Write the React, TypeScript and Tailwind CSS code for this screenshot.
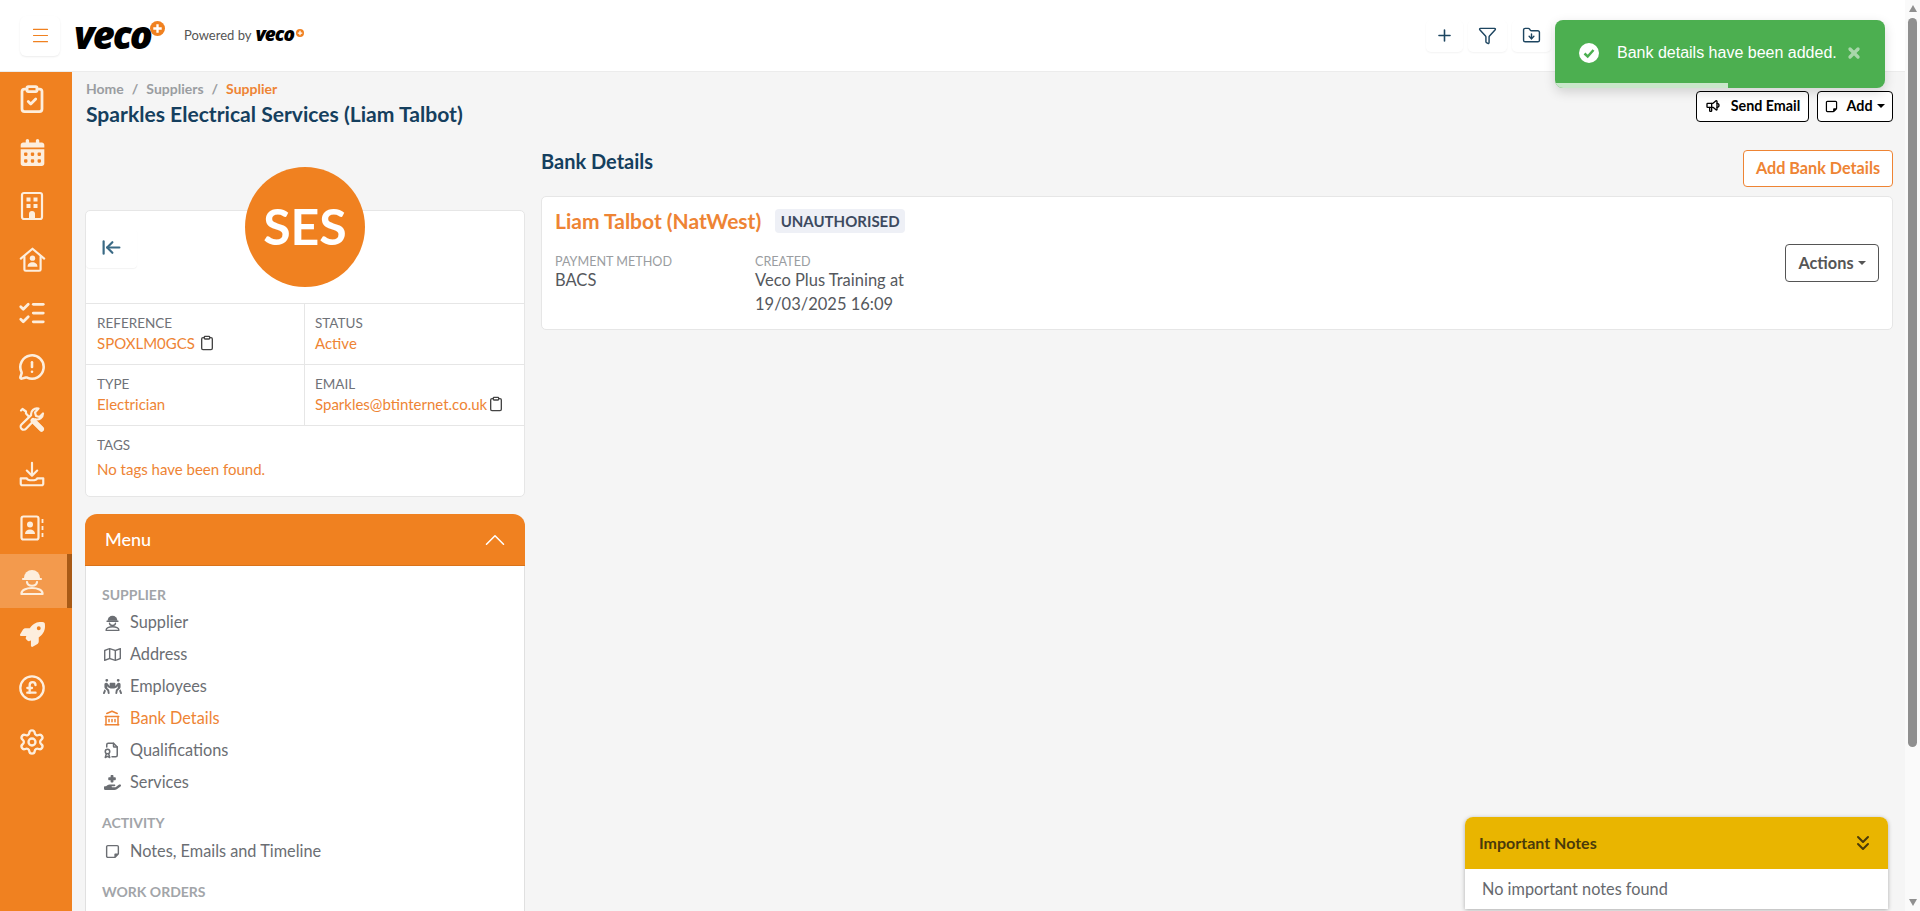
import React from 'react';
import {
  Menu, Plus, Funnel, FolderDown, ArrowLeftToLine, Clipboard, ChevronUp, ChevronsDown,
  ClipboardCheck, ListChecks, MessageCircleWarning, CirclePoundSterling, Settings, X,
} from 'lucide-react';
import { FaCalendarDays, FaPeopleCarryBox, FaRegMap, FaRegNoteSticky, FaRocket, FaHandHoldingMedical } from 'react-icons/fa6';
import { TbFileCertificate, TbBuildingBank, TbSpeakerphone } from 'react-icons/tb';

const BuildingIcon = () => (
  <svg width="24" height="30" viewBox="0 0 24 30" fill="none" stroke="currentColor" strokeWidth="2.2" strokeLinejoin="round">
    <rect x="2" y="2" width="20" height="26" rx="2" />
    <g fill="currentColor" stroke="none">
      <rect x="6.500" y="6.500" width="4" height="4" />
      <rect x="13.500" y="6.500" width="4" height="4" />
      <rect x="6.500" y="13" width="4" height="4" />
      <rect x="13.500" y="13" width="4" height="4" />
      <path d="M9 28v-5a3 3 0 0 1 6 0v5z" />
    </g>
  </svg>
);

const HomeUser = () => (
  <svg width="27" height="27" viewBox="0 0 30 30" fill="none" stroke="currentColor" strokeWidth="2.4" strokeLinejoin="round" strokeLinecap="round">
    <path d="M2 14 15 3l13 11" />
    <path d="M6 12v14a1.500 1.500 0 0 0 1.500 1.500h15A1.500 1.500 0 0 0 24 26V12" />
    <circle cx="15" cy="13.500" r="3" fill="currentColor" stroke="none" />
    <path d="M9.500 23c0-3.200 2.500-5 5.500-5s5.500 1.800 5.500 5z" fill="currentColor" stroke="none" />
  </svg>
);

const ToolsIcon = () => (
  <svg width="26" height="26" viewBox="0 0 26 26" fill="none" stroke="currentColor" strokeLinecap="round" strokeLinejoin="round">
    <path d="M2 3.500 3.500 2 7 4.500v2L13 13" strokeWidth="2.200" />
    <path d="M14 13.500 22.500 22" strokeWidth="5" />
    <path d="M24 6.500a6 6 0 0 1-7.800 5.700L7 21.800a3 3 0 0 1-4.500-4.300l9.600-9.400A6 6 0 0 1 19.500 1.500L16 5.500l1 3.500 3.500 1z" strokeWidth="2.200" fill="#f08120" />
    <path d="M14 13.500 22.500 22" strokeWidth="5" />
  </svg>
);

const InboxDown = () => (
  <svg width="26" height="26" viewBox="0 0 30 30" fill="none" stroke="currentColor" strokeWidth="2.500" strokeLinejoin="round" strokeLinecap="round">
    <path d="M15 2v15M9 11l6 6 6-6" />
    <path d="M2 20h7c1 3 11 3 12 0h7v6a2 2 0 0 1-2 2H4a2 2 0 0 1-2-2z" />
  </svg>
);

const ContactBook = () => (
  <svg width="24" height="26" viewBox="0 0 24 26" fill="none" stroke="currentColor" strokeWidth="2.200" strokeLinejoin="round">
    <rect x="1.500" y="1.500" width="17" height="23" rx="2" />
    <circle cx="10" cy="9.500" r="3" fill="currentColor" stroke="none" />
    <path d="M5 19c0-3 2.200-4.500 5-4.500s5 1.500 5 4.500z" fill="currentColor" stroke="none" />
    <path d="M22.500 4v4M22.500 11v4M22.500 18v4" strokeWidth="1.800" />
  </svg>
);

const Worker = ({ size = 28 }: { size?: number }) => (
  <svg width={size} height={size} viewBox="0 0 28 28" fill="none" stroke="currentColor" strokeWidth="2.200" strokeLinecap="round" strokeLinejoin="round">
    <path d="M6 11a8 8 0 0 1 16 0z" fill="currentColor" stroke="none" />
    <path d="M5 12h18" />
    <path d="M9 15c.5 5 9.500 5 10 0" />
    <path d="M3.500 27c-1-8 22-8 21 0z" />
  </svg>
);

const VecoLogo = ({ big }: { big?: boolean }) => (
  <span className={big ? 'relative inline-block w-[90px]' : 'relative inline-block w-[48px]'}>
    <span className={big
      ? "font-['Open_Sans'] italic font-extrabold text-[38px] leading-[38px] tracking-[-2px] text-black"
      : "font-['Open_Sans'] italic font-extrabold text-[19px] leading-[19px] tracking-[-1px] text-black"}>veco</span>
    <svg className={big ? 'absolute top-[6px] right-[-1px] w-[15px] h-[15px]' : 'absolute top-[4px] right-[-1px] w-[8px] h-[8px]'} viewBox="0 0 16 16">
      <circle cx="8" cy="8" r="8" fill="#f08120" />
      <path d="M8 3.500v9M3.500 8h9" stroke="#fff" strokeWidth="2.500" />
    </svg>
  </span>
);

const sideIcons = [
  <ClipboardCheck size={30} strokeWidth={2.2} />,
  <FaCalendarDays size={27} />,
  <BuildingIcon />,
  <HomeUser />,
  <ListChecks size={30} strokeWidth={2.2} />,
  <MessageCircleWarning size={28} strokeWidth={2.2} />,
  <ToolsIcon />,
  <InboxDown />,
  <ContactBook />,
  <Worker />,
  <FaRocket size={25} />,
  <CirclePoundSterling size={28} strokeWidth={2} />,
  <Settings size={28} strokeWidth={2} />,
];

const InfoCell = ({ label, value, copyGap, wide }: { label: string; value: string; copyGap?: string; wide?: boolean }) => (
  <div className={wide ? 'col-span-2 px-[11px] pt-[10px]' : 'px-[11px] pt-[10px] h-[60px]'}>
    <div className="text-[13.500px] leading-[18px] text-[#6f7278] uppercase">{label}</div>
    <div className={wide ? 'mt-[4px] flex items-center text-[15px] leading-[22px] text-[#ee8434]' : 'flex items-center text-[15px] leading-[22px] text-[#ee8434]'}>
      {value}
      {copyGap && <Clipboard size={16} strokeWidth={2} className={`${copyGap} text-[#444]`} />}
    </div>
  </div>
);

const MenuItem = ({ icon, label, active }: { icon: React.ReactNode; label: string; active?: boolean }) => (
  <div className={active ? 'flex h-[32px] items-center text-[#ee8434]' : 'flex h-[32px] items-center text-[#6b6e73]'}>
    <span className="flex w-[28px] justify-center pr-[8px]">{icon}</span>
    <span className="text-[16.300px]">{label}</span>
  </div>
);

const SectionLabel = ({ children, className }: { children: React.ReactNode; className?: string }) => (
  <div className={`text-[14px] leading-[20px] font-bold uppercase text-[#a2a5a9] ${className ?? ''}`}>{children}</div>
);

const HeadIcon = ({ children, className }: { children: React.ReactNode; className: string }) => (
  <div className={`flex h-[32px] items-center justify-center rounded-[5px] bg-white text-[#1d4560] shadow-[0_1px_2px_rgba(0,0,0,0.05)] ${className}`}>
    {children}
  </div>
);

export default function App() {
  return (
    <div className="flex h-screen w-full overflow-hidden bg-[#f5f5f5] font-['Lato',sans-serif]">
      <div className="flex min-w-0 flex-1 flex-col">
        {/* Top bar */}
        <header className="flex h-[72px] shrink-0 items-center border-b border-[#ececec] bg-white pl-[20px] pr-[354px]">
          <div className="flex h-[40px] w-[40px] items-center justify-center rounded-[6px] bg-white text-[#f08120] shadow-[0_1px_2px_rgba(0,0,0,0.08)]">
            <Menu size={21} strokeWidth={1.300} />
          </div>
          <div className="ml-[14px] mt-[-2px]"><VecoLogo big /></div>
          <div className="ml-[20px] mt-[1px] flex items-center text-[13px] text-[#555]">
            <span className="mr-[4px]">Powered by</span>
            <VecoLogo />
          </div>
          <div className="ml-auto flex gap-[5px]">
            <HeadIcon className="w-[37px]"><Plus size={19} strokeWidth={2} /></HeadIcon>
            <HeadIcon className="w-[39px]"><Funnel size={19} strokeWidth={1.800} /></HeadIcon>
            <HeadIcon className="w-[39px]"><FolderDown size={19} strokeWidth={1.800} /></HeadIcon>
          </div>
        </header>

        <div className="flex min-h-0 flex-1">
          {/* Icon rail */}
          <aside className="w-[72px] shrink-0 bg-[#f08120] text-[#fdeedd]">
            {sideIcons.map((icon, i) => (
              <div key={i} className={i === 9
                ? 'flex h-[53.600px] items-center justify-center border-r-[5px] border-[#a85a16] bg-[#f39a4d] pr-[3px]'
                : 'flex h-[53.600px] items-center justify-center pr-[8px]'}>
                {icon}
              </div>
            ))}
          </aside>

          <main className="min-w-0 flex-1 overflow-hidden pl-[13px] pr-[12px]">
            <div className="flex h-[78px] justify-between">
              <div className="pl-[1px] pt-[7px]">
                <div className="flex gap-[8px] text-[14px] leading-[20px] font-bold text-[#9a9da1]">
                  <span>Home</span><span>/</span><span>Suppliers</span><span>/</span>
                  <span className="text-[#ee8434]">Supplier</span>
                </div>
                <h1 className="mt-[1px] text-[21.100px] leading-[28px] font-bold text-[#153f5e]">Sparkles Electrical Services (Liam Talbot)</h1>
              </div>
              <div className="mt-[19px] flex h-[31px] gap-[8px]">
                <button className="flex w-[113px] items-center justify-center rounded-[4px] border border-black bg-white pb-[2px] text-[14.300px] font-bold text-black">
                  <TbSpeakerphone size={16} className="mr-[10px] mt-[1px]" />Send Email
                </button>
                <button className="flex w-[76px] items-center justify-center rounded-[4px] border border-black bg-white pb-[2px] text-[14.300px] font-bold text-black">
                  <FaRegNoteSticky size={13} className="mr-[8px] mt-[1px]" />Add
                  <span className="ml-[4px] h-0 w-0 border-x-[4px] border-t-[4px] border-x-transparent border-t-black" />
                </button>
              </div>
            </div>

            <div className="flex gap-[16px]">
              {/* Left column */}
              <div className="w-[440px] shrink-0">
                <div className="relative mt-[60px] rounded-[5px] border border-[#e6e6e6] bg-white">
                  <div className="absolute left-[159px] top-[-44px] flex h-[120px] w-[120px] items-center justify-center rounded-full bg-[#f08120] pb-[2px] text-[50px] font-bold text-white">SES</div>
                  <div className="h-[92px] pt-[18px]">
                    <div className="flex h-[39px] w-[51px] items-center justify-center rounded-[4px] pb-[2px] text-[#3a6a85] shadow-[0_1px_1px_rgba(0,0,0,0.05)]">
                      <ArrowLeftToLine size={21} strokeWidth={2.500} />
                    </div>
                  </div>
                  <div className="grid grid-cols-2 border-t border-[#e6e6e6]">
                    <div className="border-r border-[#e6e6e6]"><InfoCell label="Reference" value="SPOXLM0GCS" copyGap="ml-[4px]" /></div>
                    <div className="-ml-px"><InfoCell label="Status" value="Active" /></div>
                  </div>
                  <div className="grid grid-cols-2 border-t border-[#e6e6e6]">
                    <div className="border-r border-[#e6e6e6]"><InfoCell label="Type" value="Electrician" /></div>
                    <div className="-ml-px"><InfoCell label="Email" value="Sparkles@btinternet.co.uk" copyGap="ml-[1px]" /></div>
                  </div>
                  <div className="h-[71px] border-t border-[#e6e6e6]">
                    <InfoCell wide label="Tags" value="No tags have been found." />
                  </div>
                </div>

                <div className="mt-[17px] rounded-t-[12px] border-x border-[#e0e0e0] bg-white">
                  <div className="-mx-px flex h-[52px] items-center justify-between rounded-t-[12px] border-b border-[#d9731a] bg-[#f08120] pl-[20px] pr-[13px] text-white">
                    <span className="text-[18px] font-medium">Menu</span>
                    <ChevronUp size={34} strokeWidth={1.100} />
                  </div>
                  <div className="px-[16px] pt-[19px] pb-[40px]">
                    <SectionLabel>Supplier</SectionLabel>
                    <div className="mt-[1px]">
                      <MenuItem icon={<Worker size={17} />} label="Supplier" />
                      <MenuItem icon={<FaRegMap size={17} />} label="Address" />
                      <MenuItem icon={<FaPeopleCarryBox size={19} />} label="Employees" />
                      <MenuItem active icon={<TbBuildingBank size={18} />} label="Bank Details" />
                      <MenuItem icon={<TbFileCertificate size={18} />} label="Qualifications" />
                      <MenuItem icon={<FaHandHoldingMedical size={17} />} label="Services" />
                    </div>
                    <SectionLabel className="mt-[15px]">Activity</SectionLabel>
                    <div className="mt-[2px]">
                      <MenuItem icon={<FaRegNoteSticky size={15} />} label="Notes, Emails and Timeline" />
                    </div>
                    <SectionLabel className="mt-[15px]">Work Orders</SectionLabel>
                  </div>
                </div>
              </div>

              {/* Right column */}
              <div className="min-w-0 flex-1">
                <div className="flex h-[37px] justify-between">
                  <h2 className="mt-[-3px] text-[20px] leading-[28px] font-bold text-[#153f5e]">Bank Details</h2>
                  <button className="w-[150px] rounded-[4px] border border-[#ee8434] bg-white text-[16.200px] font-bold text-[#ee8434]">Add Bank Details</button>
                </div>
                <div className="mt-[9px] flex h-[134px] justify-between rounded-[5px] border border-[#e6e6e6] bg-white pl-[13px] pr-[13px]">
                  <div>
                    <div className="mt-[11px] flex items-center">
                      <span className="text-[21px] leading-[26px] font-bold text-[#ee8434]">Liam Talbot (NatWest)</span>
                      <span className="ml-[14px] flex h-[24px] w-[130px] items-center justify-center rounded-[4px] bg-[#eef0f6] text-[15px] font-bold text-[#3d4a5f]">UNAUTHORISED</span>
                    </div>
                    <div className="mt-[20px] flex">
                      <div className="w-[200px]">
                        <div className="text-[12.600px] leading-[15px] text-[#9a9da1]">PAYMENT METHOD</div>
                        <div className="text-[16.500px] leading-[23.500px] text-[#55585d]">BACS</div>
                      </div>
                      <div className="w-[170px]">
                        <div className="text-[12.600px] leading-[15px] text-[#9a9da1]">CREATED</div>
                        <div className="text-[16.500px] leading-[23.500px] text-[#55585d]">Veco Plus Training at<br />19/03/2025 16:09</div>
                      </div>
                    </div>
                  </div>
                  <button className="mt-[47px] flex h-[38px] w-[94px] items-center justify-center rounded-[4px] border border-[#555] bg-white text-[16.300px] font-bold text-[#555]">
                    Actions
                    <span className="ml-[4px] h-0 w-0 border-x-[4px] border-t-[4px] border-x-transparent border-t-[#555]" />
                  </button>
                </div>
              </div>
            </div>
          </main>
        </div>
      </div>

      {/* Scrollbar */}
      <div className="flex w-[15px] shrink-0 flex-col items-center bg-[#fafafa]">
        <div className="mt-[5px] h-0 w-0 border-x-[4px] border-b-[7px] border-x-transparent border-b-[#8f8f8f]" />
        <div className="mt-[6px] h-[729px] w-[9px] rounded-full bg-[#8f8f8f]" />
        <div className="mt-auto mb-[5px] h-0 w-0 border-x-[4px] border-t-[7px] border-x-transparent border-t-[#8f8f8f]" />
      </div>

      {/* Toast */}
      <div className="absolute left-[1555px] top-[20px] flex h-[68px] w-[330px] items-center overflow-hidden rounded-[8px] bg-[#4caf50] pb-[2px] shadow-[0_4px_12px_rgba(0,0,0,0.15)]">
        <svg className="ml-[24px] h-[20px] w-[20px]" viewBox="0 0 20 20">
          <circle cx="10" cy="10" r="10" fill="#fff" />
          <path d="M5.500 10.500 8.700 13.500 14.500 7" fill="none" stroke="#4caf50" strokeWidth="2.500" />
        </svg>
        <span className="ml-[18px] font-['Liberation_Sans'] text-[16px] text-white">Bank details have been added.</span>
        <X size={16} strokeWidth={5} className="ml-[9px] text-[#a9d7ab]" />
        <div className="absolute bottom-0 left-0 h-[5px] w-[173px] bg-[#c9e7ca]" />
      </div>

      {/* Important notes */}
      <div className="absolute left-[1465px] top-[817px] w-[423px] overflow-hidden rounded-t-[8px] bg-white shadow-[0_1px_4px_rgba(0,0,0,0.3)]">
        <div className="flex h-[52px] items-center justify-between bg-[#e9b500] pl-[14px] pr-[13px] text-[#4a3a0a]">
          <span className="text-[16px] font-bold">Important Notes</span>
          <ChevronsDown size={24} strokeWidth={2} />
        </div>
        <div className="flex h-[40px] items-center pl-[17px] text-[16.300px] text-[#66696e]">No important notes found</div>
      </div>
    </div>
  );
}
